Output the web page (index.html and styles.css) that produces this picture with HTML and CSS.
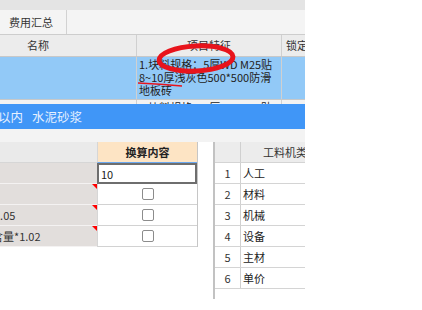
FILE: index.html
```html
<!DOCTYPE html>
<html lang="zh-CN">
<head>
    <meta charset="UTF-8">
    <title>费用汇总</title>
    <link rel="stylesheet" href="styles.css">
</head>
<body>
    <div class="app">
        <div class="topbar"></div>
        <div class="tabs">
            <div class="tab">费用汇总</div>
        </div>

        <div class="grid">
            <div class="grid-row grid-head">
                <div class="c-name name-title">名称</div>
                <div class="c-feat feat-title">项目特征</div>
                <div class="c-lock">锁定</div>
            </div>
            <div class="grid-row row-sel">
                <div class="c-name"></div>
                <div class="c-feat">1.块料规格：5厚WD M25贴<br>8~10厚浅灰色500*500防滑<br>地板砖</div>
                <div class="c-lock"></div>
            </div>
            <div class="grid-row row-next">
                <div class="c-name"></div>
                <div class="c-feat">4.块料规格：5厚WD M25贴</div>
                <div class="c-lock"></div>
            </div>
        </div>

        <div class="bar"><span>以内</span><span>水泥砂浆</span></div>
        <div class="strip"></div>

        <div class="bottom">
            <div class="calc">
                <div class="calc-head"></div>
                <div class="calc-head calc-key">换算内容</div>

                <div class="calc-label"></div>
                <div class="calc-val calc-input">10</div>

                <div class="calc-label flag"></div>
                <div class="calc-val"><span class="check"></span></div>

                <div class="calc-label flag"><span class="cut-a">1.05</span></div>
                <div class="calc-val"><span class="check"></span></div>

                <div class="calc-label flag"><span class="cut-b">含量*1.02</span></div>
                <div class="calc-val"><span class="check"></span></div>
            </div>

            <div class="types">
                <div class="types-row types-head">
                    <div class="t-no"></div>
                    <div class="t-name head-name">工料机类别</div>
                </div>
                <div class="types-row"><div class="t-no">1</div><div class="t-name">人工</div></div>
                <div class="types-row"><div class="t-no">2</div><div class="t-name">材料</div></div>
                <div class="types-row"><div class="t-no">3</div><div class="t-name">机械</div></div>
                <div class="types-row"><div class="t-no">4</div><div class="t-name">设备</div></div>
                <div class="types-row"><div class="t-no">5</div><div class="t-name">主材</div></div>
                <div class="types-row"><div class="t-no">6</div><div class="t-name">单价</div></div>
            </div>
        </div>

        <!-- hand-drawn red marks over the grid -->
        <svg class="mark" width="305" height="110" viewBox="0 0 305 110">
            <ellipse cx="196" cy="58.5" rx="37" ry="12.5" fill="none" stroke="#e8141c" stroke-width="5" transform="rotate(-3 196 58.5)"/>
            <path d="M138 83 Q160 84 182 86" fill="none" stroke="#e8141c" stroke-width="1.5"/>
        </svg>
    </div>
</body>
</html>
```

FILE: styles.css
```css
* {
    box-sizing: border-box;
}

body {
    margin: 0;
    background: #fff;
    font-family: "Noto Sans CJK SC", "DejaVu Sans", sans-serif;
    font-size: 11px;
    color: #222;
}

.app {
    position: relative;
    width: 305px;
    height: 310px;
    overflow: hidden;
}

.topbar {
    height: 10px;
    background: #e4e4e4;
}

.tabs {
    display: flex;
    height: 25px;
    background: #f4f4f4;
    border-bottom: 1px solid #cdcdcd;
}

.tab {
    width: 67px;
    padding-left: 9px;
    line-height: 24px;
    border-right: 1px solid #d2d2d2;
    color: #333;
}

.grid-row {
    display: flex;
    border-bottom: 1px solid #c8c8c8;
}

.c-name {
    width: 137px;
    flex-shrink: 0;
    border-right: 1px solid #d0d0d0;
}

.c-feat {
    width: 145px;
    flex-shrink: 0;
    padding-left: 2px;
    border-right: 1px solid #d0d0d0;
    white-space: nowrap;
    overflow: hidden;
}

.c-lock {
    flex: 1;
    padding-left: 4px;
    white-space: nowrap;
    overflow: hidden;
}

.grid-head {
    height: 22px;
    line-height: 21px;
    background: #ececec;
    color: #333;
}

.name-title {
    padding-left: 27px;
}

.feat-title {
    text-align: center;
    padding-left: 0;
}

.row-sel {
    height: 43px;
    background: #92c9f7;
    line-height: 13px;
}

.row-sel .c-feat {
    padding-top: 1px;
}

.row-next {
    height: 4px;
    border-bottom: none;
    background: #f2f2f2;
    line-height: 13px;
}

.row-next .c-feat {
    padding-top: 1px;
}

.bar {
    display: flex;
    gap: 9px;
    height: 25px;
    margin-left: -2px;
    background: #4096f7;
    color: #e6f0ff;
    font-size: 12.5px;
    line-height: 25px;
}

.strip {
    height: 13px;
    background: #f3f3f3;
}

.bottom {
    display: flex;
    align-items: flex-start;
}

/* 换算 table */
.calc {
    display: grid;
    grid-template-columns: 97px 100px;
    grid-auto-rows: 21px;
    border-right: 1px solid #c6c6c6;
}

.calc-head {
    background: #eaeaea;
    border-bottom: 1px solid #d6d6d6;
}

.calc-key {
    background: #fde4c4;
    border-left: 1px solid #d6d6d6;
    border-bottom-color: #6aa8f0;
    text-align: center;
    font-weight: bold;
    line-height: 20px;
    color: #222;
}

.calc-label {
    position: relative;
    background: #e2dedc;
    border-bottom: 1px solid #f4f2f2;
    line-height: 20px;
    white-space: nowrap;
    overflow: hidden;
    color: #333;
}

.flag::after {
    content: "";
    position: absolute;
    top: 0;
    right: 0;
    border-top: 5px solid #f00;
    border-left: 5px solid transparent;
}

.cut-a {
    margin-left: -6px;
}

.cut-b {
    margin-left: -8px;
}

.calc-val {
    display: flex;
    align-items: center;
    justify-content: center;
    background: #fff;
    border-left: 1px solid #d6d6d6;
    border-bottom: 1px solid #d2d2d2;
}

.calc-input {
    justify-content: flex-start;
    padding-left: 2px;
    border: 2px solid #6e6e6e;
}

.check {
    width: 12px;
    height: 12px;
    border: 1px solid #8c8c8c;
    border-radius: 2px;
    background: #fff;
}

/* 工料机类别 list */
.types {
    margin-left: 15px;
    flex: 1;
    height: 157px;
    border-left: 2px solid #c2c2c2;
}

.types-row {
    display: flex;
    height: 21px;
    line-height: 20px;
    border-bottom: 1px solid #d4d4d4;
    background: #fff;
}

.types-head {
    background: #ececec;
    color: #333;
}

.t-no {
    width: 26px;
    flex-shrink: 0;
    text-align: center;
    border-right: 1px solid #d0d0d0;
    color: #333;
}

.t-name {
    flex: 1;
    padding-left: 2px;
    white-space: nowrap;
    overflow: hidden;
}

.head-name {
    padding-left: 22px;
}

.mark {
    position: absolute;
    top: 0;
    left: 0;
}
```
